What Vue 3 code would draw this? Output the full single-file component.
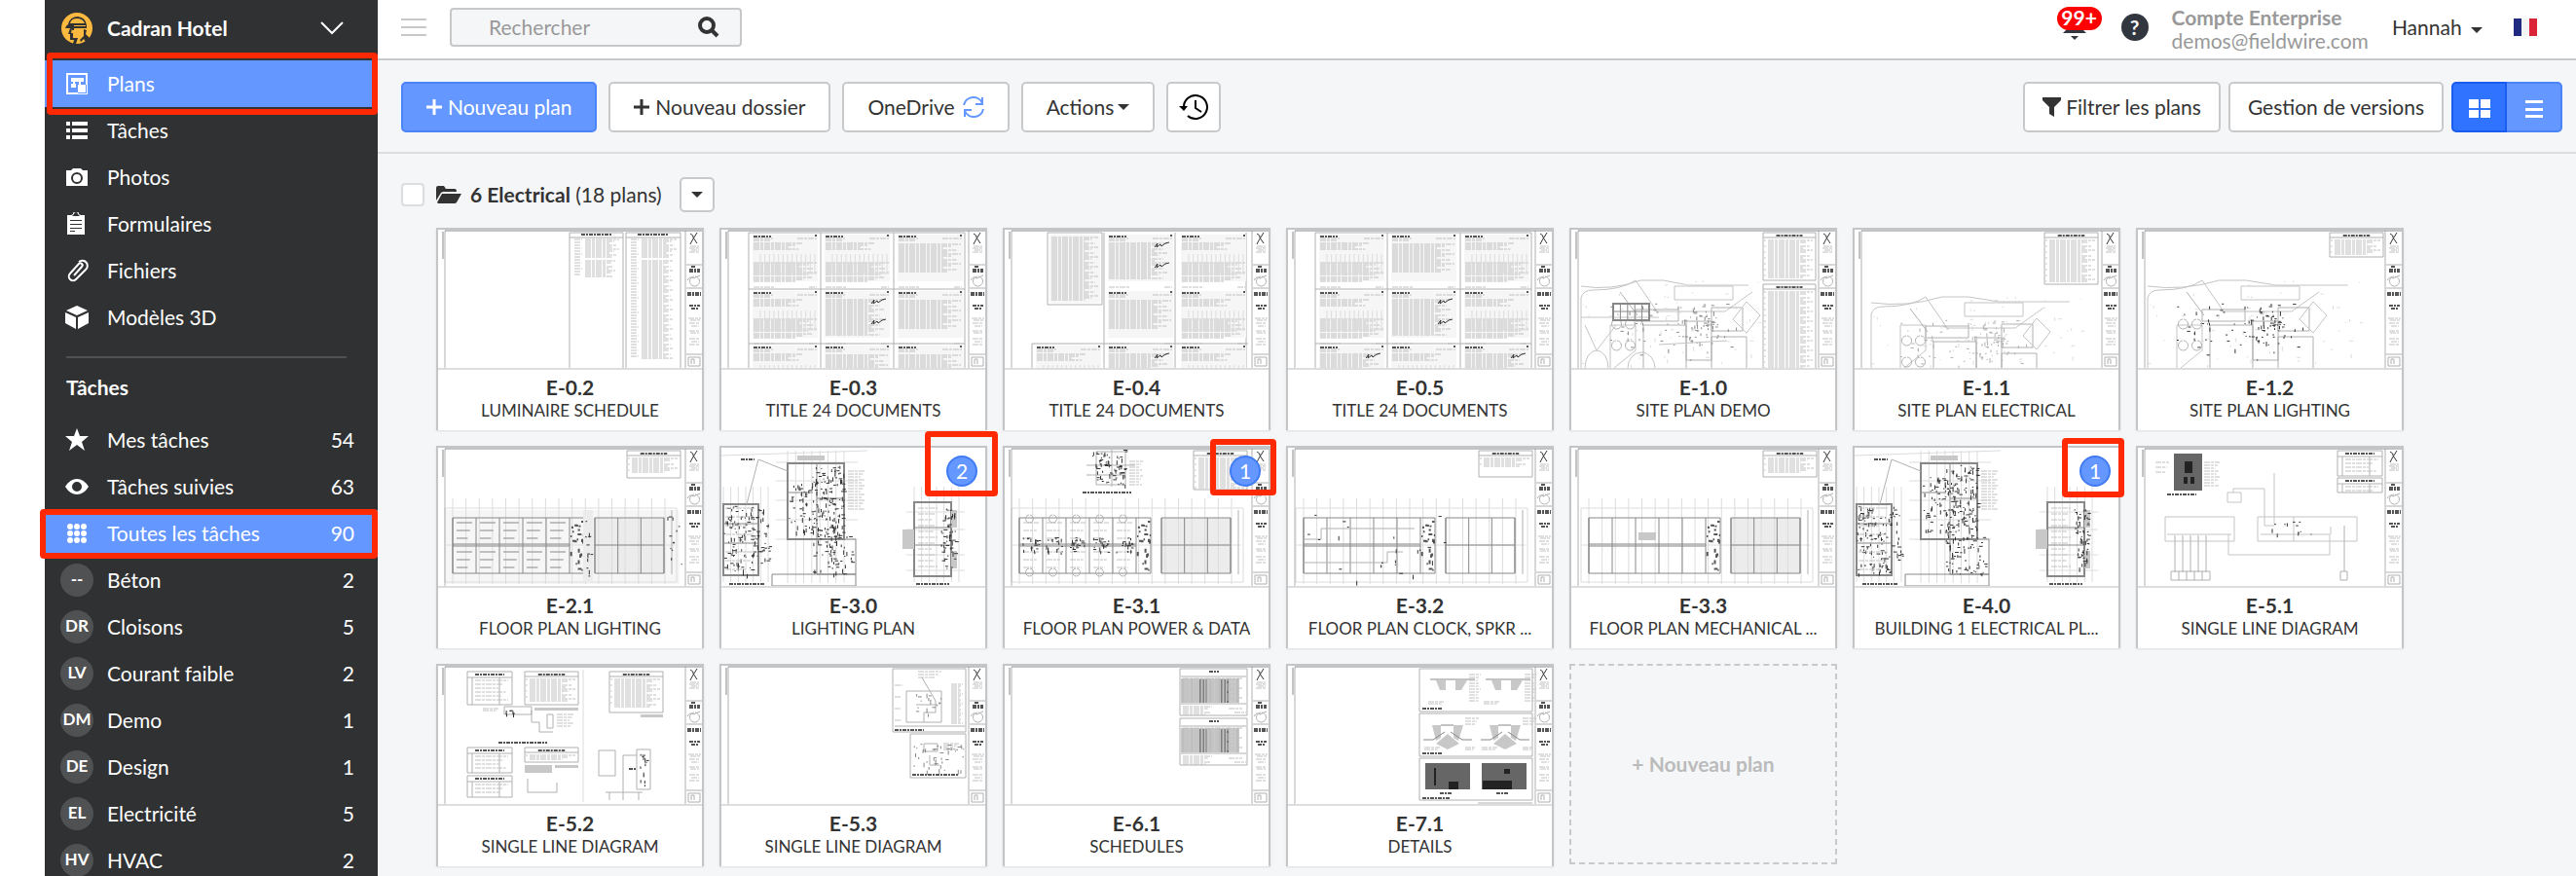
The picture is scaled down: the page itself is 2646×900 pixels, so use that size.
<script setup>
	import { ref } from 'vue'

	const search = ref('')
	const checked = ref(false)
	const view = ref('grid')

	const menus = [
		{ name: 'Plans', icon: 'plan', active: true, mark: 'mark-menu' },
		{ name: 'Tâches', icon: 'list' },
		{ name: 'Photos', icon: 'camera' },
		{ name: 'Formulaires', icon: 'form' },
		{ name: 'Fichiers', icon: 'clip' },
		{ name: 'Modèles 3D', icon: 'cube' }
	]

	const filters = [
		{ name: 'Mes tâches', icon: 'star', num: 54 },
		{ name: 'Tâches suivies', icon: 'eye', num: 63 },
		{ name: 'Toutes les tâches', icon: 'dots', num: 90, active: true, mark: 'mark-filter' },
		{ name: 'Béton', code: '--', num: 2 },
		{ name: 'Cloisons', code: 'DR', num: 5 },
		{ name: 'Courant faible', code: 'LV', num: 2 },
		{ name: 'Demo', code: 'DM', num: 1 },
		{ name: 'Design', code: 'DE', num: 1 },
		{ name: 'Electricité', code: 'EL', num: 5 },
		{ name: 'HVAC', code: 'HV', num: 2 }
	]

	// 24x24 filled icons
	const icons = {
		plan: 'M1 1h22v22H1zM3 3v18h18V3zM6 6h13v4H6zM6 12h5v4H6zM8 10h2v2H8zM14 10h2v3h6v9h-9v-9h1z',
		list: 'M1 3h4v4H1zM7 3h16v4H7zM1 10h4v4H1zM7 10h16v4H7zM1 17h4v4H1zM7 17h16v4H7z',
		camera: 'M1 5h5l2-2h8l2 2h5v16H1zM12 7a6 6 0 1 0 0 12a6 6 0 1 0 0-12zM12 9a4 4 0 1 1 0 8a4 4 0 1 1 0-8z',
		form: 'M2 3h4l2-1a3 3 0 0 1 6 0l2 1h4v20H2zM7 4h8l-2-2a2 2 0 0 0-4 0zM5 8v1h12V8zM5 12v1h12v-1zM5 16v1h12v-1zM5 19v1h5v-1z',
		cube: 'M12 0l11 5l-11 5L1 5zM0 7l11 5v12L0 18zM24 7l-11 5v12l11-6z',
		star: 'M12 0l3 8h9l-7 6l3 9l-8-6l-8 6l3-9l-7-6h9z',
		eye: 'M0 12Q5 4 12 4T24 12Q19 20 12 20T0 12zM12 7a5 5 0 1 0 0 10a5 5 0 1 0 0-10z',
		dots: [2, 9, 16].map(y => [2, 9, 16].map(x => `M${x} ${y + 3}a3 3 0 1 0 6 0a3 3 0 1 0-6 0`).join('')).join('')
	}

	// path helpers for the sheet previews
	const box = (x, y, w, h) => `M${x} ${y}h${w}v${h}h${-w}z`
	const rows = (x, y, w, h, step = 2) => {
		let d = ''
		for (let i = 0; i * step <= h; i++) {
			d += `M${x} ${y + i * step}h${w - (i * 7 % 5) * w / 14}`
		}
		return d
	}
	const cols = (x, y, w, h, n) => {
		let d = ''
		for (let i = 0; i <= n; i++) d += `M${x + w * i / n} ${y}v${h}`
		return d
	}
	const specks = (x, y, w, h, n, seed = 7) => {
		let d = ''
		let s = seed
		const next = () => (s = (s * 16807) % 2147483647) / 2147483647
		for (let i = 0; i < n; i++) {
			const px = (x + next() * w).toFixed(1)
			const py = (y + next() * h).toFixed(1)
			d += `M${px} ${py}` + (next() > 0.5 ? `h${(1 + next() * 3).toFixed(1)}` : `v${(1 + next() * 4).toFixed(1)}`)
		}
		return d
	}

	const notes = (x, y, w, h, fill = h - 10) => [
		['line', box(x, y, w, h) + `M${x} ${y + 5}h${w}`],
		['bold', `M${x + w / 4} ${y + 3}h${w / 2}`],
		['text', rows(x + 5, y + 8, w - 8, fill) + rows(x + 1, y + 8, 2, fill, 6)]
	]

	const formPage = (x, y, kind) => {
		const out = [
			['haze', box(x + 4, y + 2, 67, 48)],
			['bold', `M${x + 5} ${y + 4}h18M${x + 68} ${y + 3}h2`],
			['text', rows(x + 5, y + 6, 20, 3) + `M${x + 50} ${y + 6}h20M${x + 5} ${y + 56}h22M${x + 62} ${y + 56}h8`]
		]
		if (kind == 'sign') {
			out.push(['text', rows(x + 5, y + 11, 60, 36)])
			out.push(['dark', `M${x + 52} ${y + 15}l3-4l-1 4l4-3l1 2l4-3l4-1M${x + 52} ${y + 36}l3-4l-1 4l4-3l1 2l4-3l4-1`])
		} else if (kind == 'list') {
			out.push(['text', rows(x + 5, y + 12, 64, 28)])
		} else {
			out.push(['text', rows(x + 5, y + 11, 50, 6) + rows(x + 5, y + 31, 66, 12)])
			out.push(['pale', cols(x + 12, y + 22, 56, 20, 12) + `M${x + 5} ${y + 31}h65M${x + 5} ${y + 42}h65`])
			out.push(['text', rows(x + 5, y + 46, 60, 4)])
		}
		return out
	}

	const formSheet = kinds => {
		const out = [['line', 'M28 3h222M28 61h222M28 117h222M28 3v139M102 3v139M177 3v139M250 3v139']]
		kinds.forEach((kind, i) => {
			if (kind) out.push(...formPage([28, 102, 177][i % 3], [3, 61, 117][Math.floor(i / 3)], kind))
		})
		return out
	}

	const schedule = (x, w, h) => [
		['line', box(x, 3, w, 142)],
		['bold', `M${x + 12} 5h${w - 24}`],
		['line', `M${x} 8h${w}`],
		['text', rows(x + 16, 10, w - 20, 18) + rows(x + 16, 32, w - 24, h - 32) + rows(x + 5, 10, 8, h - 10, 3)]
	]

	const site = (x, y, w, k = 'line') => [
		['road', `M${x} ${y + 6}q${w / 6} 5 ${w / 3} -6h${w / 8}l${w / 7} 5h${w / 3}M${x} 142V${y + 18}q2 -8 12 -8q30 0 44 -10l22 32h70l28 -20M${x + 30} 142v-44h26v26l-22 18M${x + 96} ${y + 6}h60v14h-60z`],
		['line', box(x + 64, y + 46, 44, 50) + box(x + 108, y + 42, 26, 40) + box(x + 134, y + 28, 32, 24) + box(x + 134, y + 58, 36, 34) + `M${x + 56} ${y + 30}h44v12h-44zM${x + 40} ${y + 12}l18 24`],
		['road', `M${x + 170} ${y + 22}l14 14l-14 18l-14 -14z`],
		[k, specks(x + 100, y + 26, 40, 40, 50, 11) + specks(x + 30, y + 22, 130, 60, 50, 5)],
		['pale', specks(x, y, w, 140 - y, 60, 91)],
		['line', `M${x + 36} ${y + 40}a5 5 0 1 0 1 0M${x + 50} ${y + 40}a5 5 0 1 0 1 0M${x + 36} ${y + 62}a5 5 0 1 0 1 0M${x + 50} ${y + 62}a5 5 0 1 0 1 0`]
	]

	// long school wing: rooms on the left, gym block on the right
	const wing = (x, y, hatched, furniture) => {
		const out = [
			['pale', cols(x, y - 20, 218, 88, 16) + box(x - 8, y - 10, 238, 76) + `M${x - 8} ${y + 28}h236`],
			['wall', box(x, y, 135, 57) + box(x + 146, y, 71, 57) + `M${x} ${y + 27}h120M${x} ${y + 29}h120M${x + 146} ${y + 28}h71`],
			['wall', cols(x, y, 120, 57, 5) + cols(x + 146, y, 71, 57, 3)],
			['line', `M${x + 225} ${y - 8}v66`],
			['bold', specks(x + 121, y, 13, 56, 24, 33)]
		]
		if (hatched) out.unshift(['hatch', box(x + 146, y, 71, 57)])
		if (furniture) {
			for (let i = 0; i < 5; i++) {
				const rx = x + 4 + i * 24
				out.push([furniture > 1 ? 'text' : 'wall', rows(rx, y + 5, 16, 18, 8) + rows(rx, y + 35, 16, 18, 8)])
				if (furniture > 1) {
					out.push(['dark', specks(rx, y + 20, 16, 16, 20, i + 3)])
					out.push(['line', `M${rx + 6} ${y - 3}a4 4 0 1 0 1 0M${rx + 6} ${y + 52}a4 4 0 1 0 1 0`])
				}
			}
		}
		return out
	}

	const campus = seed => [
		['pale', cols(2, 40, 46, 98, 6) + cols(68, 3, 58, 136, 7) + cols(198, 40, 46, 98, 6) + 'M0 8L150 3M56 15h84M56 34h84M56 54h84M56 74h84M56 94h84M190 66h60M190 84h60M190 110h60M190 126h60'],
		['frame', box(2, 58, 36, 73) + box(68, 16, 58, 78) + box(198, 56, 38, 76)],
		['wall', 'M2 78h36M2 98h36M98 16v78M68 46h26M98 52h28' + box(98, 94, 40, 36) + 'M198 82h38M198 100h38' + box(52, 130, 86, 12)],
		['gray', box(186, 84, 12, 20) + box(236, 64, 6, 18) + box(236, 106, 6, 18) + box(78, 8, 28, 5)],
		['dark', specks(3, 60, 46, 70, 130, seed) + specks(94, 18, 32, 75, 150, seed + 3) + specks(70, 30, 24, 60, 50, seed + 5) + specks(94, 90, 40, 40, 60, seed + 9) + specks(226, 62, 14, 62, 60, seed + 14)],
		['text', rows(4, 62, 30, 64, 9) + rows(202, 62, 20, 64, 6) + rows(130, 24, 18, 40, 3)],
		['bold', 'M20 12h14M8 140h36M200 140h34'],
		['line', 'M38 12L26 58M38 12L68 24']
	]

	const table = (x, y, w, h) => [
		['line', box(x, y, w, h)],
		['bold', `M${x + 8} ${y + 3}h${w - 16}`],
		['line', rows(x, y + 6, w, 0) + `M${x + 5} ${y + 6}V${y + h}M${x + w - 13} ${y + 6}V${y + h}`],
		['text', rows(x + 8, y + 9, w - 12, h - 11, 4)]
	]

	const ladder = y => [
		['gray', box(181, y + 10, 60, 25)],
		['line', box(180, y, 69, 48) + cols(183, y + 10, 56, 25, 6) + `M181 ${y + 8}h67M181 ${y + 36}h67`],
		['bold', `M210 ${y + 3}h10`],
		['dark', cols(201, y + 11, 6, 24, 2) + cols(223, y + 11, 6, 24, 2)],
		['text', rows(183, y + 10, 62, 24) + rows(183, y + 39, 30, 8) + `M230 ${y + 41}h14M236 ${y + 45}h12`]
	]

	const trench = (x, y) => [
		['gray', `M${x} ${y + 12}h10v22h10v-22h12l-6 10h-6v12h-10v-12h-6z`],
		['wall', `M${x - 6} ${y + 11}h46`],
		['text', rows(x + 34, y + 6, 12, 28, 3) + rows(x - 8, y + 34, 16, 3)]
	]
	const slope = (x, y) => [
		['gray', `M${x} ${y + 11}h9v13l-5 3zM${x + 32} ${y + 11}h-10v13l5 3zM${x + 4} ${y + 30}l12-10l12 10l-12 6z`],
		['wall', `M${x - 9} ${y + 26}h10l12-8M${x + 41} ${y + 26}h-10l-12-8M${x + 9} ${y + 11}h13`],
		['text', rows(x + 34, y + 4, 14, 6, 3) + rows(x - 8, y + 34, 16, 3) + rows(x + 34, y + 34, 10, 3)]
	]

	const plans = [
		{ code: 'E-0.2', name: 'LUMINAIRE SCHEDULE', art: [...schedule(135, 55, 48), ...schedule(193, 56, 132)] },
		{ code: 'E-0.3', name: 'TITLE 24 DOCUMENTS', art: formSheet(['table', 'table', 'list', 'table', 'sign', 'list', 'table', 'list', 'list']) },
		{ code: 'E-0.4', name: 'TITLE 24 DOCUMENTS', art: [['line', box(44, 3, 56, 74) + 'M28 117h222M102 3v139M175 3v139M248 3v139M28 117v25'], ['haze', box(46, 5, 52, 70)], ['text', rows(48, 8, 48, 64)], ...formSheet([0, 'sign', 'table', 0, 'list', 'table', 'table', 'sign', 'table']).slice(1)] },
		{ code: 'E-0.5', name: 'TITLE 24 DOCUMENTS', art: formSheet(['table', 'list', 'table', 'table', 'sign', 'table', 'sign', 'table', 'sign']) },
		{ code: 'E-1.0', name: 'SITE PLAN DEMO', art: [...notes(197, 3, 54, 49), ...notes(197, 56, 54, 90), ...site(10, 52, 184, 'wall'), ['road', 'M14 142a12 18 0 0 1 24 0M58 142a14 16 0 0 1 28 0M10 90h80M90 118l70 -4M26 124L14 98M26 124l20 -26'], ['frame', box(43, 76, 37, 17)], ['wall', cols(43, 76, 37, 17, 5) + 'M43 84h37']] },
		{ code: 'E-1.1', name: 'SITE PLAN ELECTRICAL', art: [...notes(195, 3, 55, 53), ...site(17, 69, 218, 'line')] },
		{ code: 'E-1.2', name: 'SITE PLAN LIGHTING', art: [...notes(197, 3, 55, 25), ...site(10, 52, 220, 'dark')] },
		{ code: 'E-2.1', name: 'FLOOR PLAN LIGHTING', art: [...notes(194, 3, 55, 28, 14), ['haze', box(8, 64, 240, 76)], ...wing(15, 72, true, 1), ['hatch', box(149, 64, 10, 74)], ['dark', specks(236, 68, 14, 60, 12, 8) + specks(151, 66, 6, 70, 12, 18)]] },
		{ code: 'E-3.0', name: 'LIGHTING PLAN', art: campus(21), full: true, count: 2, mark: 'mark-large' },
		{ code: 'E-3.1', name: 'FLOOR PLAN POWER & DATA', art: [...notes(194, 3, 55, 40), ['line', box(94, 4, 30, 34) + 'M84 18h50M84 28h40M110 2v38'], ['dark', specks(90, 2, 34, 36, 70, 9)], ['text', rows(128, 14, 14, 26, 3)], ['bold', 'M80 46h50'], ...wing(15, 72, true, 2)], count: 1, mark: 'mark-medium' },
		{ code: 'E-3.2', name: 'FLOOR PLAN CLOCK, SPKR ...', art: [...notes(196, 3, 55, 27, 8), ...wing(16, 72, false, 0), ['line', 'M34 83h96M16 94h18v-11M16 118h86v-11h16'], ['dark', specks(20, 64, 140, 74, 24, 71)]] },
		{ code: 'E-3.3', name: 'FLOOR PLAN MECHANICAL ...', art: [...notes(197, 3, 55, 27, 14), ...wing(18, 72, true, 0), ['gray', box(69, 87, 18, 8)]] },
		{ code: 'E-4.0', name: 'BUILDING 1 ELECTRICAL PL...', art: campus(57), full: true, count: 1, mark: 'mark-small' },
		{ code: 'E-5.1', name: 'SINGLE LINE DIAGRAM', art: [['photo', box(37, 6, 29, 38)], ['photo-dark', box(48, 14, 8, 12) + box(47, 30, 4, 7) + box(54, 30, 4, 7)], ['text', rows(18, 15, 14, 14, 5) + rows(68, 15, 16, 26, 3)], ['bold', 'M30 48h30'], ['road', box(28, 71, 71, 25) + box(123, 71, 102, 25) + 'M160 71v25M92 46h14v10h-14zM98 46v-4h32v38h10M140 26v52M30 89h66M93 89v21h104V90M126 89h72v-8'], ['line', cols(38, 90, 32, 38, 4) + cols(34, 127, 40, 9, 5) + box(208, 127, 7, 9) + 'M212 80v47M34 127h40M34 136h40'], ...table(205, 3, 46, 26), ...table(205, 31, 46, 15), ['dark', specks(138, 76, 40, 14, 12, 4)]] },
		{ code: 'E-5.2', name: 'SINGLE LINE DIAGRAM', art: [...table(30, 6, 46, 34), ...notes(89, 6, 55, 34, 22), ...notes(176, 6, 55, 42, 28), ...table(30, 84, 46, 26), ...notes(89, 84, 55, 15, 4), ...table(30, 113, 46, 22), ['line', 'M68 42h28v8h-28zM96 46v12h8v10h14M112 50h6v14h-6zM165 87h17v26h-17zM204 86h14v41h-14zM190 92h14M190 92v38M172 130h38M176 130v8M190 130v8M206 130v8M92 116v14h30v-10'], ['pale', 'M149 4v136'], ['gray', box(99, 43, 45, 3) + box(208, 50, 23, 3) + box(89, 102, 28, 8) + box(120, 102, 24, 3)], ['bold', 'M62 79h50M196 106h8'], ['dark', specks(70, 46, 14, 4, 8, 3) + specks(208, 90, 6, 34, 14, 3)], ['text', rows(122, 50, 18, 12, 3) + rows(46, 44, 16, 3)]] },
		{ code: 'E-5.3', name: 'SINGLE LINE DIAGRAM', art: [['line', box(176, 3, 75, 65) + box(194, 70, 57, 45) + box(190, 26, 36, 32) + 'M178 62h72M206 12l14 24v12h-12v10M200 40h22M208 88h14v-8h-14zM214 92v10h10'], ['text', rows(202, 6, 24, 8, 3) + rows(236, 19, 12, 40) + rows(178, 20, 8, 36, 12) + rows(228, 80, 16, 6)], ['bold', 'M178 66h30M196 112h48'], ['wall', specks(200, 28, 26, 24, 16, 6) + specks(198, 80, 50, 28, 44, 44)]] },
		{ code: 'E-6.1', name: 'SCHEDULES', art: [...ladder(3), ...ladder(54)] },
		{ code: 'E-7.1', name: 'DETAILS', art: [['line', box(135, 3, 116, 44) + box(135, 49, 116, 44) + box(135, 95, 116, 43) + 'M195 141h56'], ...trench(152, 3), ...trench(209, 3), ...slope(148, 50), ...slope(207, 50), ['photo', box(141, 100, 46, 27) + box(199, 100, 46, 27)], ['photo-dark', box(165, 119, 10, 8) + box(150, 105, 2, 18) + box(200, 118, 30, 9) + box(222, 106, 6, 5)], ['bold', 'M138 44h20M138 90h20M138 136h28M156 131h12M214 131h12']] }
	]
</script>
<template>
	<div class="shell">
		<aside class="side">
			<button class="project">
				<svg class="logo" viewBox="0 0 34 34">
					<circle cx="17" cy="17" r="16" fill="#fbb93f" />
					<path d="M5 17q1-3 3-4q2-8 10-8q8 1 9 9v3H14v2h-2v-2z" fill="#303133" />
					<path d="M10 12q1-5 7-5q6 0 8 5zM14 14h12v1H14z" fill="#fbb93f" />
					<path d="M10 17h2l-1 5h2v5h5l-2 6h-3l1-4h-4v-6H8zM24 18l3 1l-1 4l4 4l-4 4l-2-3l-3 3l-1-2l4-4z" fill="#303133" />
				</svg>
				<span class="project-name">Cadran Hotel</span>
				<svg class="chevron" viewBox="0 0 26 16"><path d="M2 2l11 11L24 2" /></svg>
			</button>
			<nav>
				<a v-for="item in menus" :key="item.name" href="#" class="row" :class="{ active: item.active }">
					<span class="row-icon">
						<svg v-if="item.icon == 'clip'" class="icon clip" viewBox="0 0 24 24">
							<path d="M9 17l8-9a2 2 0 0 0-3-3l-9 10a4 4 0 0 0 6 6L21 11a5 5 0 0 0-7-8" />
						</svg>
						<svg v-else class="icon" viewBox="0 0 24 24"><path :d="icons[item.icon]" fill-rule="evenodd" /></svg>
					</span>
					<span class="row-name">{{ item.name }}</span>
					<i v-if="item.mark" class="mark" :class="item.mark"></i>
				</a>
			</nav>
			<hr class="divider">
			<h2 class="side-title">Tâches</h2>
			<nav>
				<a v-for="item in filters" :key="item.name" href="#" class="row" :class="{ active: item.active }">
					<span class="row-icon">
						<span v-if="item.code" class="avatar">{{ item.code }}</span>
						<svg v-else class="icon" viewBox="0 0 24 24"><path :d="icons[item.icon]" fill-rule="evenodd" /></svg>
					</span>
					<span class="row-name">{{ item.name }}</span>
					<span class="row-num">{{ item.num }}</span>
					<i v-if="item.mark" class="mark" :class="item.mark"></i>
				</a>
			</nav>
		</aside>

		<main class="main">
			<header class="top">
				<button class="burger" aria-label="Menu"><i></i><i></i><i></i></button>
				<form class="search" @submit.prevent>
					<input v-model.trim="search" type="text" placeholder="Rechercher" aria-label="Rechercher">
					<button aria-label="Lancer la recherche">
						<svg viewBox="0 0 22 22"><circle cx="9" cy="9" r="7" /><path d="M14 14l6 6" /></svg>
					</button>
				</form>
				<div class="account">
					<button class="bell" aria-label="Notifications">
						<svg viewBox="0 0 24 24"><path d="M4 4h16v8l4 4H0l4-4zM8 19h8l-4 4z" /></svg>
						<span class="bell-num">99+</span>
					</button>
					<button class="help" aria-label="Aide">?</button>
					<div class="company">
						<b>Compte Enterprise</b>
						<span>demos@fieldwire.com</span>
					</div>
					<button class="user">Hannah <i class="caret"></i></button>
					<button class="lang" aria-label="Français">
						<svg viewBox="0 0 24 18">
							<path d="M0 0h8v18H0z" fill="#1f2a80" />
							<path d="M8 0h8v18H8z" fill="#f4f4f6" />
							<path d="M16 0h8v18h-8z" fill="#dc2438" />
						</svg>
					</button>
				</div>
			</header>

			<div class="tools">
				<button class="btn primary"><svg class="plus" viewBox="0 0 16 16"><path d="M8 0v16M0 8h16" /></svg>Nouveau plan</button>
				<button class="btn"><svg class="plus" viewBox="0 0 16 16"><path d="M8 0v16M0 8h16" /></svg>Nouveau dossier</button>
				<button class="btn">OneDrive
					<svg class="sync" viewBox="0 0 22 22"><path d="M1 9a10 10 0 0 1 19-2M20 1v7h-7M21 13a10 10 0 0 1-19 2M2 21v-7h7" /></svg>
				</button>
				<button class="btn">Actions<i class="caret"></i></button>
				<button class="btn square" aria-label="Historique">
					<svg class="history" viewBox="0 0 30 28">
						<path d="M5 15A12 12 0 1 1 9 23M17 7v8l6 4" />
						<path class="tip" d="M0 13h9l-4 5z" />
					</svg>
				</button>
				<div class="tools-right">
					<button class="btn"><svg class="funnel" viewBox="0 0 19 20"><path d="M0 0h19v3l-7 7v10l-5-3v-7L0 3z" /></svg>Filtrer les plans</button>
					<button class="btn">Gestion de versions</button>
					<div class="switch">
						<button :class="{ on: view == 'grid' }" aria-label="Grille" @click="view = 'grid'">
							<svg viewBox="0 0 22 20"><path d="M0 0h10v9H0zM12 0h10v9H12zM0 11h10v8H0zM12 11h10v8H12z" /></svg>
						</button>
						<button :class="{ on: view == 'list' }" aria-label="Liste" @click="view = 'list'">
							<svg viewBox="0 0 22 20"><path d="M2 1h18v3H2zM2 9h18v3H2zM2 16h18v3H2z" /></svg>
						</button>
					</div>
				</div>
			</div>

			<section class="folder">
				<div class="folder-head">
					<label class="folder-label">
						<input v-model="checked" type="checkbox">
						<svg class="folder-icon" viewBox="0 0 26 18"><path d="M0 15V2q0-2 2-2h6l2 3h9q2 0 2 3H8q-2 0-3 1zM1 17L6 8h20l-5 9q-1 1-2 1H2z" /></svg>
						<span><b>6 Electrical</b> (18 plans)</span>
					</label>
					<button class="folder-more" aria-label="Options du dossier"><i class="caret"></i></button>
				</div>
				<div class="grid">
					<a v-for="plan in plans" :key="plan.code" href="#" class="card">
						<svg class="thumb" viewBox="0 0 271 142">
							<path v-for="(part, i) in plan.art" :key="i" :class="part[0]" :d="part[1]" />
							<g v-if="!plan.full">
								<path class="line" d="M7 1v141M254 1v141M255 36h16M255 60h16M255 128h16M257 131h12v9h-12zM260 138v-5h3v5" />
								<path class="wall" d="M7 1h264M5 2v28" />
								<path class="dark" d="M259 4q4 2 3 4l4 6M266 3l-5 8l-2 4" />
								<path class="bold" d="M260 38h5M258 41h11M258 43h11M256 65h14M256 67h14M258 78h11M260 81h7" />
								<path class="line" d="M256 52q3-5 6-2l7-3M263 48a5 5 0 1 0 1 0" />
								<path class="text" d="M259 17h9M258 19h11M260 21h8M258 23h11M257 91h13M259 93h10M258 96h11M260 99h8M258 104h11M259 106h9M258 112h11M260 115h8M258 118h10" />
							</g>
						</svg>
						<div class="card-text">
							<b>{{ plan.code }}</b>
							<span>{{ plan.name }}</span>
						</div>
						<span v-if="plan.count" class="count">{{ plan.count }}</span>
						<i v-if="plan.mark" class="mark" :class="plan.mark"></i>
					</a>
					<button class="card-new">+ Nouveau plan</button>
				</div>
			</section>
		</main>
	</div>
</template>
<style>
	body {
	background: #fff;
	}
</style>
<style scoped>
	.shell {
	display: flex;
	height: 100vh;
	padding-left: 46px;
	overflow: hidden;
	box-sizing: border-box;
	font-family: Lato, "Open Sans", sans-serif;
	font-size: 21px;
	line-height: 24px;
	color: #333;
	}
	.shell * {
	box-sizing: border-box;
	}
	button {
	padding: 0;
	border: 0;
	background: none;
	font: inherit;
	color: inherit;
	cursor: pointer;
	}
	a {
	color: inherit;
	text-decoration: none;
	}
	.side {
	flex: none;
	width: 342px;
	background: #303133;
	color: #fff;
	}
	.project {
	display: flex;
	align-items: center;
	width: 100%;
	height: 62px;
	padding: 0 34px 4px 16px;
	}
	.logo {
	width: 34px;
	height: 34px;
	}
	.project-name {
	flex: 1;
	margin-left: 14px;
	font-weight: bold;
	text-align: left;
	}
	.chevron {
	width: 26px;
	height: 16px;
	fill: none;
	stroke: #fff;
	stroke-width: 2;
	}
	.row {
	position: relative;
	display: flex;
	align-items: center;
	height: 48px;
	padding: 0 24px 0 16px;
	}
	.row.active {
	background: #6497ff;
	}
	.row-icon {
	display: flex;
	justify-content: center;
	width: 34px;
	margin-right: 14px;
	}
	.row-name {
	flex: 1;
	}
	.icon {
	width: 24px;
	height: 24px;
	fill: #fff;
	}
	.icon.clip {
	fill: none;
	stroke: #fff;
	stroke-width: 2;
	}
	.avatar {
	width: 34px;
	height: 34px;
	border-radius: 50%;
	background: #505153;
	font-size: 17px;
	font-weight: bold;
	line-height: 32px;
	text-align: center;
	}
	.divider {
	height: 2px;
	margin: 16px 32px 0 22px;
	border: 0;
	background: #505153;
	}
	.side-title {
	margin: 0 0 0 22px;
	font-size: 21px;
	line-height: 60px;
	}
	/* red frames that point at a control */
	.mark {
	position: absolute;
	z-index: 1;
	border: 6px solid #ff2a04;
	border-radius: 4px;
	pointer-events: none;
	}
	.mark-menu {
	inset: -8px 0 -8px 2px;
	}
	.mark-filter {
	inset: -1px 0 -2px -5px;
	}
	.mark-large {
	top: -17px;
	right: -13px;
	width: 75px;
	height: 67px;
	}
	.mark-medium {
	top: -9px;
	right: -8px;
	width: 68px;
	height: 58px;
	}
	.mark-small {
	top: -10px;
	right: -6px;
	width: 64px;
	height: 61px;
	}
	.main {
	flex: 1;
	min-width: 0;
	background: #f5f6f8;
	}
	.top {
	display: flex;
	align-items: center;
	height: 62px;
	padding: 0 40px 4px 24px;
	border-bottom: 2px solid #c8c9cb;
	background: #fff;
	}
	.burger {
	display: grid;
	gap: 6px;
	width: 26px;
	margin-right: 24px;
	}
	.burger i {
	height: 2px;
	background: #c8c8c8;
	}
	.search {
	display: flex;
	align-items: center;
	width: 300px;
	height: 40px;
	padding: 0 21px 0 38px;
	border: 2px solid #c8c8c8;
	border-radius: 4px;
	background: #f5f6f8;
	}
	.search input {
	flex: 1;
	min-width: 0;
	padding: 0;
	border: 0;
	outline: none;
	background: none;
	font: inherit;
	color: #333;
	}
	.search input::placeholder {
	color: #999;
	}
	.search svg {
	display: block;
	width: 22px;
	height: 22px;
	fill: none;
	stroke: #333;
	stroke-width: 4;
	}
	.account {
	display: flex;
	align-items: center;
	margin-left: auto;
	}
	.bell {
	position: relative;
	width: 24px;
	height: 24px;
	margin: 4px 36px 0 0;
	}
	.bell svg {
	display: block;
	fill: #32363f;
	}
	.bell-num {
	position: absolute;
	top: -11px;
	left: -6px;
	width: 46px;
	height: 24px;
	border-radius: 12px;
	background: #f00;
	color: #fff;
	font-weight: bold;
	line-height: 22px;
	}
	.help {
	width: 28px;
	height: 28px;
	margin-right: 24px;
	border-radius: 50%;
	background: #32363f;
	color: #fff;
	font-weight: bold;
	}
	.company {
	display: grid;
	margin-right: 24px;
	padding-top: 4px;
	color: #999;
	}
	.user {
	margin-right: 32px;
	}
	.caret {
	display: inline-block;
	margin-left: 4px;
	border: 6px solid transparent;
	border-top-color: #333;
	border-bottom: 0;
	vertical-align: middle;
	}
	.lang svg {
	display: block;
	width: 24px;
	height: 18px;
	}
	.tools {
	display: flex;
	gap: 12px;
	height: 96px;
	padding: 22px 14px 0 24px;
	border-bottom: 2px solid #dcdddf;
	}
	.tools-right {
	display: flex;
	gap: 8px;
	margin-left: auto;
	}
	.btn {
	display: flex;
	align-items: center;
	height: 52px;
	padding: 0 24px;
	border: 2px solid #c8c9cb;
	border-radius: 5px;
	background: #fff;
	white-space: nowrap;
	}
	.btn.primary {
	border-color: #4a84f8;
	background: #6497ff;
	color: #fff;
	}
	.btn.square {
	padding: 0 10px;
	}
	.tools-right .btn {
	padding: 0 18px;
	}
	.plus {
	width: 16px;
	height: 16px;
	margin-right: 6px;
	stroke: currentColor;
	stroke-width: 3;
	}
	.sync {
	width: 22px;
	height: 22px;
	margin-left: 8px;
	fill: none;
	stroke: #6497ff;
	stroke-width: 2;
	}
	.history {
	width: 32px;
	height: 28px;
	fill: none;
	stroke: #000;
	stroke-width: 2;
	}
	.history .tip {
	fill: #000;
	stroke: none;
	}
	.funnel {
	width: 19px;
	height: 20px;
	margin-right: 5px;
	fill: #333;
	}
	.switch {
	display: flex;
	}
	.switch button {
	width: 57px;
	height: 52px;
	border: 2px solid #4a84f8;
	border-left: 0;
	border-radius: 0 5px 5px 0;
	background: #6497ff;
	}
	.switch button:first-child {
	border-left: 2px solid #4a84f8;
	border-radius: 5px 0 0 5px;
	}
	.switch button.on {
	border-color: #1a5cf0;
	background: #2f73ff;
	}
	.switch svg {
	width: 22px;
	height: 20px;
	fill: #fff;
	vertical-align: middle;
	}
	.folder {
	padding: 24px 24px 0;
	}
	.folder-head {
	display: flex;
	align-items: center;
	gap: 18px;
	margin-bottom: 16px;
	}
	.folder-label {
	display: flex;
	align-items: center;
	}
	.folder-label input {
	width: 24px;
	height: 24px;
	margin: 0 12px 0 0;
	border: 2px solid #dcdddf;
	border-radius: 4px;
	background: #fff;
	appearance: none;
	}
	.folder-label input:checked {
	background: #6497ff;
	}
	.folder-icon {
	width: 26px;
	height: 18px;
	margin-right: 9px;
	fill: #333;
	}
	.folder-more {
	width: 36px;
	height: 36px;
	border: 2px solid #c8c9cb;
	border-radius: 5px;
	background: #fff;
	line-height: 0;
	}
	.folder-more .caret {
	margin: 0;
	}
	.grid {
	display: flex;
	flex-wrap: wrap;
	gap: 16px;
	margin-left: 36px;
	}
	.card {
	position: relative;
	width: 275px;
	height: 208px;
	border: 2px solid #c4c5c7;
	border-bottom: 0;
	background: #fff;
	text-align: center;
	box-shadow: 0 1px 2px #ddd;
	}
	.thumb {
	display: block;
	width: 100%;
	height: 142px;
	fill: none;
	}
	.card-text {
	display: grid;
	padding: 6px 12px 0;
	border-top: 2px solid #dcdddf;
	}
	.card-text span {
	overflow: hidden;
	font-size: 17px;
	white-space: nowrap;
	text-overflow: ellipsis;
	}
	.line {
	stroke: #b0b0b0;
	}
	.pale {
	stroke: #dcdcdc;
	}
	.road {
	stroke: #c4c4c4;
	}
	.wall {
	stroke: #888;
	}
	.frame {
	stroke: #888;
	stroke-width: 2;
	}
	.dark {
	stroke: #333;
	}
	.bold {
	stroke: #555;
	stroke-width: 2;
	stroke-dasharray: 4 1 2 1;
	}
	.text {
	stroke: #c0c0c0;
	stroke-dasharray: 6 1 3 1;
	}
	.haze {
	fill: #f6f6f6;
	}
	.hatch {
	fill: #ececec;
	}
	.gray {
	fill: #c8c8c8;
	}
	.photo {
	fill: #666;
	}
	.photo-dark {
	fill: #222;
	}
	.count {
	position: absolute;
	top: 8px;
	right: 8px;
	width: 32px;
	height: 32px;
	border: 2px solid #3f7bf5;
	border-radius: 50%;
	background: #6497ff;
	color: #fff;
	line-height: 28px;
	}
	.card-new {
	width: 275px;
	height: 206px;
	border: 2px dashed #c8c9cb;
	font-weight: bold;
	color: #bbb;
	}
</style>
